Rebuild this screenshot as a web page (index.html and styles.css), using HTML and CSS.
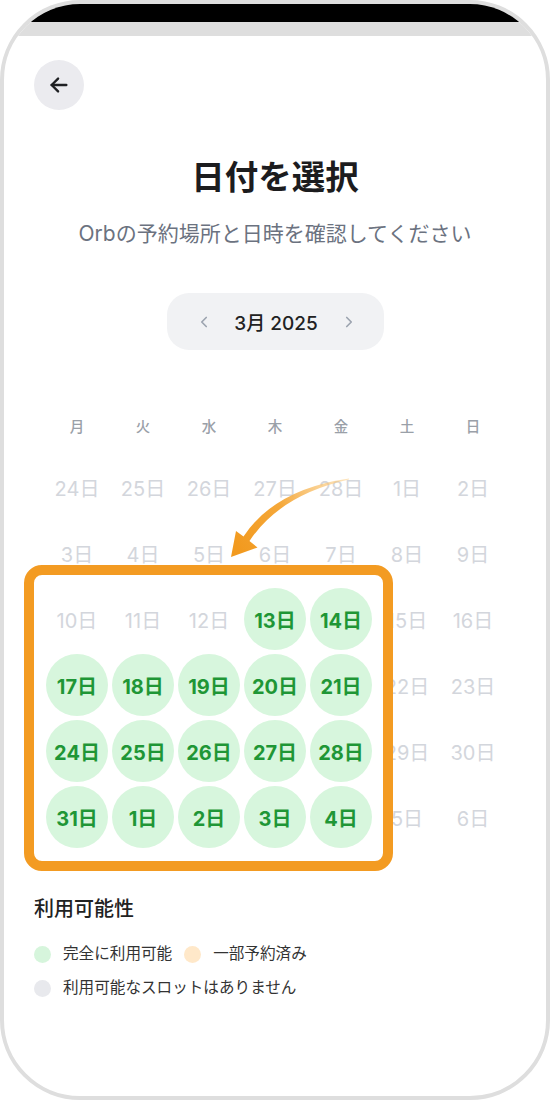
FILE: index.html
```html
<!doctype html>
<html lang="ja">
<head>
  <meta charset="utf-8">
  <title>日付を選択</title>
  <link rel="stylesheet" href="styles.css">
</head>
<body>
  <div class="phone">
    <div class="status-bar"></div>
    <div class="status-strip"></div>
    <div class="screen">
      <button type="button" class="back-btn" aria-label="戻る">
        <svg width="22" height="22" viewBox="0 0 24 24" fill="none" stroke="currentColor" stroke-width="2.6" stroke-linecap="round" stroke-linejoin="round">
          <path d="M20 12H4"/>
          <path d="M11 5l-7 7 7 7"/>
        </svg>
      </button>

      <h1 class="title">日付を選択</h1>
      <p class="subtitle">Orbの予約場所と日時を確認してください</p>

      <div class="month-picker">
        <button type="button" class="month-nav" aria-label="前の月">
          <svg width="18" height="18" viewBox="0 0 24 24" fill="none" stroke="currentColor" stroke-width="2.2" stroke-linecap="round" stroke-linejoin="round"><path d="M15 18l-6-6 6-6"/></svg>
        </button>
        <span class="month-label">3月 2025</span>
        <button type="button" class="month-nav" aria-label="次の月">
          <svg width="18" height="18" viewBox="0 0 24 24" fill="none" stroke="currentColor" stroke-width="2.2" stroke-linecap="round" stroke-linejoin="round"><path d="M9 18l6-6-6-6"/></svg>
        </button>
      </div>

      <div class="calendar">
        <div class="weekday">月</div>
        <div class="weekday">火</div>
        <div class="weekday">水</div>
        <div class="weekday">木</div>
        <div class="weekday">金</div>
        <div class="weekday">土</div>
        <div class="weekday">日</div>

        <div class="day">24日</div>
        <div class="day">25日</div>
        <div class="day">26日</div>
        <div class="day">27日</div>
        <div class="day">28日</div>
        <div class="day">1日</div>
        <div class="day">2日</div>

        <div class="day">3日</div>
        <div class="day">4日</div>
        <div class="day">5日</div>
        <div class="day">6日</div>
        <div class="day">7日</div>
        <div class="day">8日</div>
        <div class="day">9日</div>

        <div class="day">10日</div>
        <div class="day">11日</div>
        <div class="day">12日</div>
        <div class="day available"><span>13日</span></div>
        <div class="day available"><span>14日</span></div>
        <div class="day">15日</div>
        <div class="day">16日</div>

        <div class="day available"><span>17日</span></div>
        <div class="day available"><span>18日</span></div>
        <div class="day available"><span>19日</span></div>
        <div class="day available"><span>20日</span></div>
        <div class="day available"><span>21日</span></div>
        <div class="day">22日</div>
        <div class="day">23日</div>

        <div class="day available"><span>24日</span></div>
        <div class="day available"><span>25日</span></div>
        <div class="day available"><span>26日</span></div>
        <div class="day available"><span>27日</span></div>
        <div class="day available"><span>28日</span></div>
        <div class="day">29日</div>
        <div class="day">30日</div>

        <div class="day available"><span>31日</span></div>
        <div class="day available"><span>1日</span></div>
        <div class="day available"><span>2日</span></div>
        <div class="day available"><span>3日</span></div>
        <div class="day available"><span>4日</span></div>
        <div class="day">5日</div>
        <div class="day">6日</div>

        <!-- annotation: arrow + highlight box -->
        <svg class="callout-arrow" width="140" height="100" viewBox="220 470 140 100">
          <defs>
            <linearGradient id="arrowFade" x1="348" y1="481" x2="238" y2="552" gradientUnits="userSpaceOnUse">
              <stop offset="0" stop-color="#fbd08a" stop-opacity="0.55"/>
              <stop offset="0.55" stop-color="#f5a83a"/>
              <stop offset="1" stop-color="#f29a1f"/>
            </linearGradient>
          </defs>
          <path fill="url(#arrowFade)" d="M348,480.4 Q274,491 242.5,538.5 L235,533 L230,559 L256.5,549.5 L248.5,543 Q279,497 348,481.6 Z"/>
        </svg>
        <div class="highlight"></div>
      </div>

      <div class="legend">
        <h2 class="legend-title">利用可能性</h2>
        <div class="legend-items">
          <div class="legend-item"><span class="dot dot-free"></span>完全に利用可能</div>
          <div class="legend-item"><span class="dot dot-partial"></span>一部予約済み</div>
          <div class="legend-item"><span class="dot dot-none"></span>利用可能なスロットはありません</div>
        </div>
      </div>
    </div>
  </div>
</body>
</html>
```

FILE: styles.css
```css
* {
  box-sizing: border-box;
}
body {
  margin: 0;
  background: #fff;
  font-family: Inter, "Noto Sans CJK JP", sans-serif;
  color: #1f2023;
}
button {
  font-family: inherit;
  border: none;
  padding: 0;
  cursor: pointer;
}

.phone {
  width: 550px;
  height: 1100px;
  border: 4px solid #dedede;
  border-radius: 80px;
  overflow: hidden;
  background: #fff;
}
.status-bar {
  height: 18px;
  background: #000;
}
.status-strip {
  height: 14px;
  background: #dedede;
}
.screen {
  padding: 0 30px;
}

.back-btn {
  display: flex;
  align-items: center;
  justify-content: center;
  width: 50px;
  height: 50px;
  margin-top: 24px;
  border-radius: 50%;
  background: #ebebef;
  color: #1f2023;
}

.title {
  margin: 44px 0 0;
  font-size: 33.5px;
  line-height: 46px;
  font-weight: 700;
  text-align: center;
  color: #1c1c1e;
}
.subtitle {
  margin: 19px 0 0;
  font-size: 21px;
  line-height: 30px;
  text-align: center;
  color: #6b7280;
}

.month-picker {
  display: flex;
  align-items: center;
  justify-content: space-between;
  width: 217px;
  height: 57px;
  margin: 44px auto 0;
  padding: 0 26px 0 28px;
  border-radius: 22px;
  background: #f1f2f4;
}
.month-nav {
  display: flex;
  background: none;
  color: #9ca3af;
}
.month-label {
  font-size: 19px;
  font-weight: 500;
  color: #222;
}

.calendar {
  position: relative;
  display: grid;
  grid-template-columns: repeat(7, 66px);
  grid-template-rows: 58px;
  grid-auto-rows: 66px;
  width: 462px;
  margin: 46px auto 0;
}
.weekday {
  display: flex;
  align-items: center;
  justify-content: center;
  font-size: 14.5px;
  font-weight: 500;
  color: #9aa0a8;
}
.day {
  display: flex;
  align-items: center;
  justify-content: center;
  font-size: 20px;
  color: #d3d6dc;
}
.day.available span {
  display: flex;
  align-items: center;
  justify-content: center;
  width: 62px;
  height: 62px;
  border-radius: 50%;
  background: #d7f6dd;
  color: #1f9636;
  font-weight: 700;
}

.callout-arrow {
  position: absolute;
  left: 177px;
  top: 72px;
}
.highlight {
  position: absolute;
  left: -20px;
  top: 169px;
  width: 369px;
  height: 306px;
  border: 10px solid #f39b22;
  border-radius: 18px;
  pointer-events: none;
}

.legend {
  margin-top: 45px;
}
.legend-title {
  margin: 0;
  font-size: 20px;
  line-height: 28px;
  font-weight: 500;
  color: #222;
}
.legend-items {
  display: flex;
  flex-wrap: wrap;
  column-gap: 12px;
  row-gap: 10px;
  width: 300px;
  margin-top: 19px;
}
.legend-item {
  display: flex;
  align-items: center;
  gap: 12px;
  font-size: 15.6px;
  line-height: 24px;
  color: #333;
}
.dot {
  width: 17px;
  height: 17px;
  border-radius: 50%;
}
.dot-free {
  background: #d6f5dc;
}
.dot-partial {
  background: #ffe8c9;
}
.dot-none {
  background: #e8e9ed;
}
```
